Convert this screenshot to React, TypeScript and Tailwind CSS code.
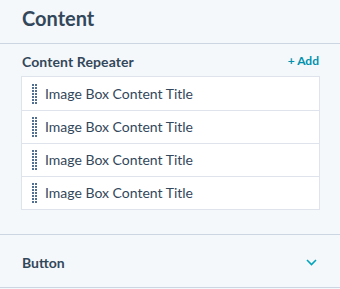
function DragHandle() {
  const rows = [0, 3, 6, 9, 12, 15, 18]
  return (
    <svg width="5" height="20" viewBox="0 0 5 20" className="shrink-0">
      {rows.map((y) => (
        <g key={y} fill="#516f90">
          <rect x="0" y={y} width="2" height="2" />
          <rect x="3" y={y} width="2" height="2" />
        </g>
      ))}
    </svg>
  )
}

export default function App() {
  const items = ['Image Box Content Title', 'Image Box Content Title', 'Image Box Content Title', 'Image Box Content Title']

  return (
    <div className="w-[340px] h-[289px] bg-[#f5f8fa] text-[#33475b] font-['Lato',sans-serif] overflow-hidden">
      {/* Header */}
      <div className="h-[44px] border-b border-[#cbd6e2] px-[22px] pt-[5px]">
        <h1 className="text-[20px] font-bold leading-[26px]">Content</h1>
      </div>

      {/* Repeater */}
      <div className="h-[191px] border-b border-[#cbd6e2] px-[21px] pt-[8px]">
        <div className="flex items-center justify-between h-[18px] mb-[6px] pl-[1px]">
          <span className="text-[14px] font-bold tracking-[0.1px]">Content Repeater</span>
          <span className="text-[12px] font-bold text-[#0091ae]">+ Add</span>
        </div>
        <div className="w-[299px] bg-white border border-[#dfe3eb]">
          {items.map((t, i) => (
            <div
              key={i}
              className={`flex items-center h-[33px] pl-[10px] gap-[8px] ${i > 0 ? 'border-t border-[#dfe3eb]' : ''}`}
            >
              <DragHandle />
              <span className="text-[14px] leading-none">{t}</span>
            </div>
          ))}
        </div>
      </div>

      {/* Button section */}
      <div className="h-[53px] border-b border-[#cbd6e2] pl-[22px] pr-[23px] pt-[3px] flex items-center justify-between">
        <span className="text-[14px] font-bold">Button</span>
        <svg width="11" height="7" viewBox="0 0 11 7" fill="none">
          <polyline points="1,1 5.5,5.5 10,1" stroke="#00a4bd" strokeWidth="1.6" />
        </svg>
      </div>
    </div>
  )
}
